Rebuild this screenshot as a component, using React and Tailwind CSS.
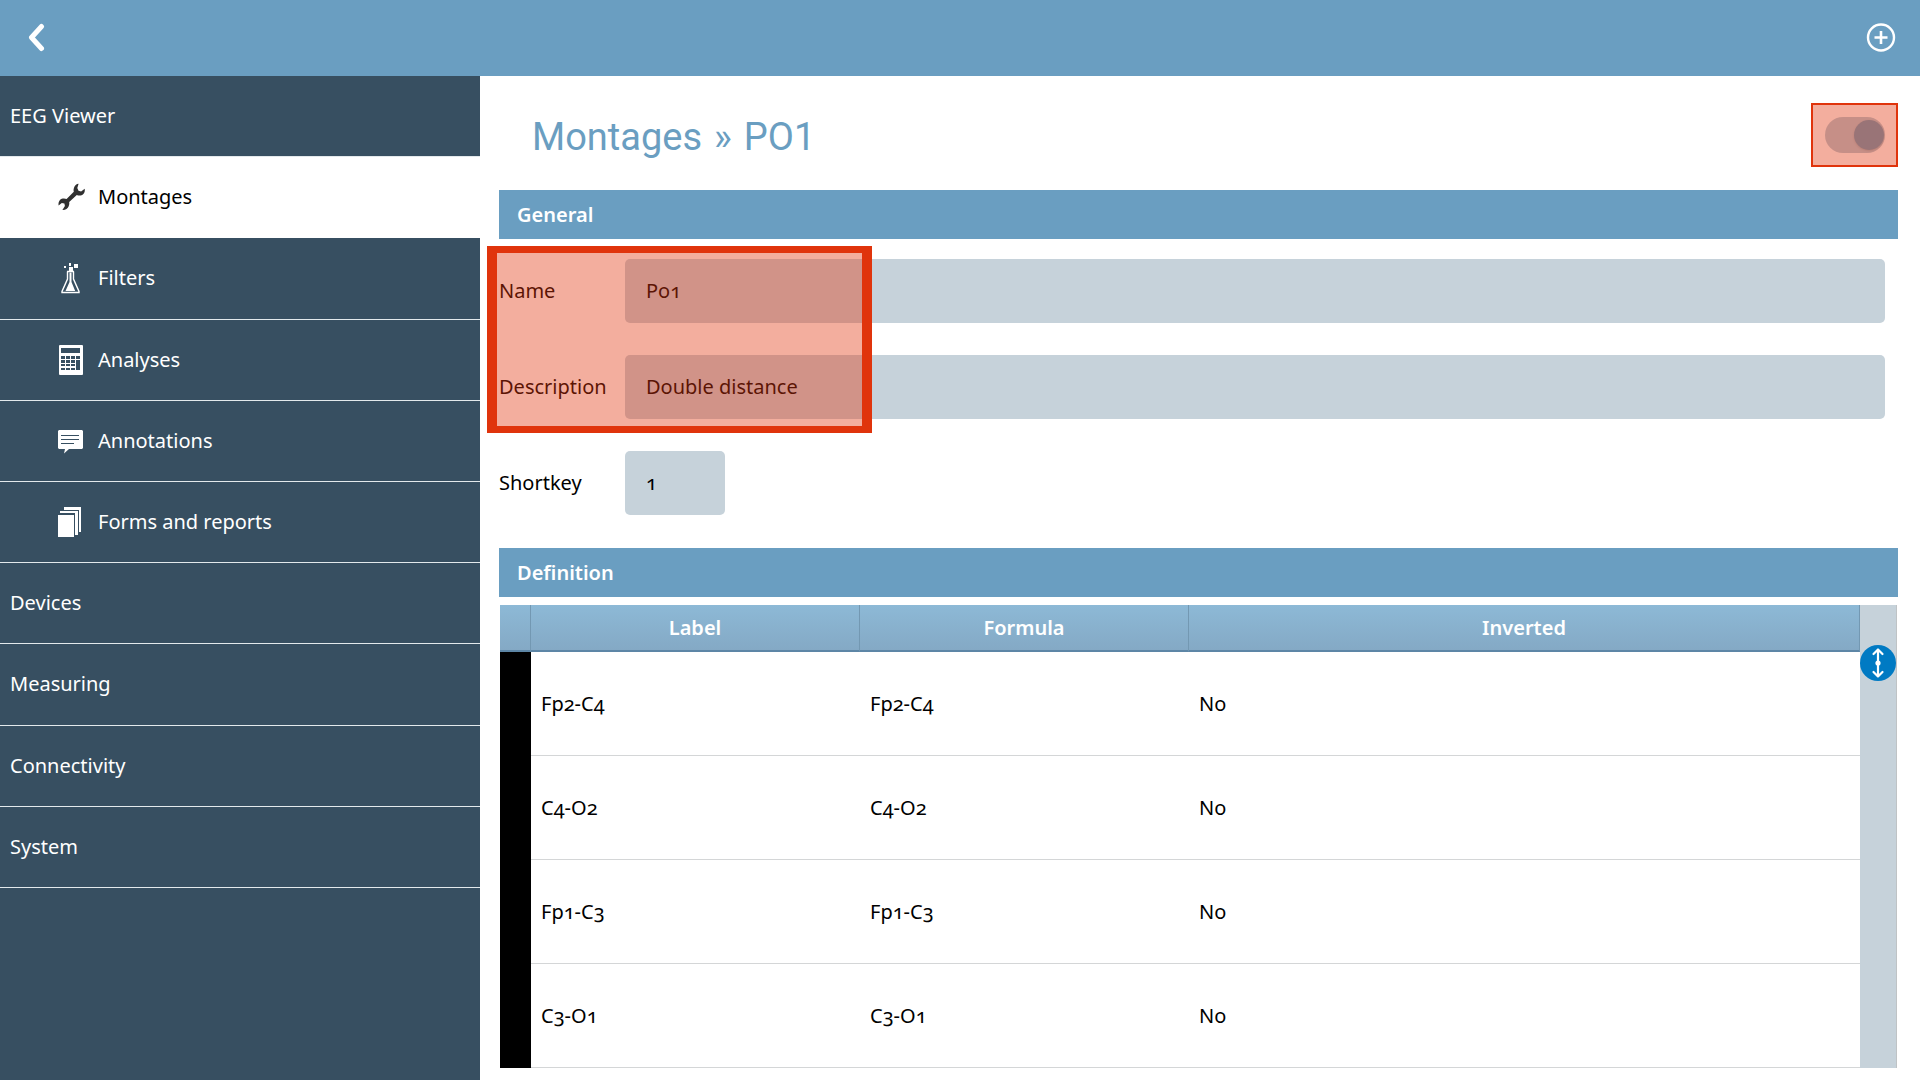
import React from "react";

const WrenchIcon = () => (
  <svg viewBox="0 0 28 28" className="size-7" fill="#303030" aria-hidden="true">
    <path d="M20.6.8 19.3 5l1.2 2.8 2.6.6 3.6-2.6c.6 3.4-1 6.2-4.200 6.700-1.400.2-2.600-.1-3.700-.5l-7.600 7.100c.3 1.400.1 2.700-.5 4.100-1 2.600-3.300 3.900-6.300 3.700l2.500-3.800-.5-2.600-2.600-.6-3.200 2.600c-.5-3.300 1-6.300 4.300-6.900 1.400-.2 2.600 0 3.700.5l7.200-7.300c-.4-1.200-.4-2.500.1-3.900.8-2.500 2.500-4 4.700-4.100z" />
  </svg>
);

const FlaskIcon = () => (
  <svg viewBox="0 0 28 32" className="w-7 h-8" fill="#fff" aria-hidden="true">
    <path d="M6 4h2v2H6zM11 1h2v3h-2zM16 2h4v4h-4zM11 5h4v4h-4z" />
    <path d="M9 9.500h7M9.500 9.500V17L4 29.500v1h17v-1L15.500 17V9.500" fill="none" stroke="#fff" strokeWidth="1.400" />
    <path d="M11.500 10.500h2V20l3.700 9H7.500l4-9z" />
  </svg>
);

const CalculatorIcon = () => (
  <svg viewBox="0 0 28 32" className="w-7 h-8" aria-hidden="true">
    <rect x="1" y="1" width="24" height="30" rx="1" fill="#fff" />
    <g fill="#374f61">
      <path d="M3 4h19v5H3z" />
      <path d="M3 12h4v3H3zM8 12h4v3H8zM13 12h4v3h-4zM18 12h4v3h-4z" />
      <path d="M3 16h4v3H3zM8 16h4v3H8zM13 16h4v3h-4zM18 16h4v10h-4z" />
      <path d="M3 20h4v2H3zM8 20h4v2H8zM13 20h4v2h-4zM3 24h4v2H3zM8 24h4v2H8zM13 24h4v2h-4z" />
    </g>
  </svg>
);

const NoteIcon = () => (
  <svg viewBox="0 0 28 32" className="w-7 h-8" aria-hidden="true">
    <path d="M1 5h23l1 1v17l-1 1H11l-5 4.500L7 24H1l-1-1V6z" fill="#fff" />
    <path d="M3 10.500h18M3 14.500h18M3 18.500h13" stroke="#374f61" strokeWidth="1" />
  </svg>
);

const FormsIcon = () => (
  <svg viewBox="0 0 28 32" className="w-7 h-8" fill="#fff" aria-hidden="true">
    <path d="M0 9h16v22H0z" />
    <path d="M2 5h18v24h-3V7H2z" />
    <path d="M6 1h17v25h-2V4H6z" />
  </svg>
);

const menu = [
  { label: "EEG Viewer" },
  { label: "Montages", Icon: WrenchIcon, active: true },
  { label: "Filters", Icon: FlaskIcon },
  { label: "Analyses", Icon: CalculatorIcon },
  { label: "Annotations", Icon: NoteIcon },
  { label: "Forms and reports", Icon: FormsIcon },
  { label: "Devices" },
  { label: "Measuring" },
  { label: "Connectivity" },
  { label: "System" },
];

const channels = ["Fp2-C4", "C4-O2", "Fp1-C3", "C3-O1"];

function MenuItem({ label, Icon, active }) {
  const tone = active ? "bg-white text-black border-white" : "text-white border-[#e3e9ec]";
  return (
    <a href="#" className={`flex items-center border-b ${Icon ? "pl-[58px] gap-3" : "pl-[10px]"} ${tone}`}>
      {Icon && <Icon />}
      <span>{label}</span>
    </a>
  );
}

function SectionBar({ children }) {
  return <h2 className="flex h-[49px] items-center bg-[#6a9ec1] pl-[18px] font-semibold text-white">{children}</h2>;
}

function Field({ id, label, value, size }) {
  return (
    <div className="flex items-center">
      <label htmlFor={id} className="w-[126px] shrink-0">{label}</label>
      <input id={id} type="text" defaultValue={value} className={`h-16 rounded-[5px] bg-[#c6d2da] px-[21px] pb-0.5 outline-none ${size}`} />
    </div>
  );
}

const headCell =
  "h-[47px] border-r border-b-2 border-r-[#7398b2] border-b-[#5d86a6] bg-linear-to-b from-[#8db9d6] to-[#84a9c5] font-semibold text-white";
const bodyCell = "border-b border-[#d4d6d7] pl-[10px]";

export default function App() {
  return (
    <div className="flex min-h-screen flex-col bg-white font-['Noto_Sans',sans-serif] text-[20px] leading-7 text-black [font-feature-settings:'onum']">
      <header className="flex h-[76px] items-center justify-between bg-[#6a9ec1] pr-6 pl-[26px]">
        <button type="button" aria-label="Back">
          <svg viewBox="0 0 20 30" className="h-[30px] w-5" fill="none" stroke="#fff" strokeWidth="5" strokeLinecap="round" strokeLinejoin="round">
            <path d="M15.500 3.500 5.500 14.500l10 11" />
          </svg>
        </button>
        <button type="button" aria-label="Add">
          <svg viewBox="0 0 30 30" className="size-[30px]" fill="none" stroke="#fff">
            <circle cx="15" cy="14.500" r="13" strokeWidth="2.400" />
            <path d="M15 8v13M8.500 14.500h13" strokeWidth="2.600" />
          </svg>
        </button>
      </header>

      <div className="flex flex-1">
        <aside className="w-1/4 shrink-0 bg-[#374f61]">
          <nav className="grid h-[812px] grid-rows-10">
            {menu.map((item) => (
              <MenuItem key={item.label} {...item} />
            ))}
          </nav>
        </aside>

        <main className="min-w-0 flex-1 pr-[22px] pl-[19px]">
          <div className="flex h-[114px] items-center justify-between pt-1 pl-[33px]">
            <h1 className="flex gap-3 pt-1 font-['Roboto',sans-serif] text-[38px] leading-[48px] text-[#6a9ec1] [font-feature-settings:normal]">
              <span>Montages</span> <span>»</span> <span>PO1</span>
            </h1>
            <label className="relative flex h-16 w-[87px] items-center justify-center">
              <input type="checkbox" role="switch" defaultChecked aria-label="Montage enabled" className="absolute inset-0 opacity-0" />
              <span className="flex h-9 w-[60px] items-center justify-end rounded-full bg-[#b5ccd9] p-[1px]">
                <span className="size-[30px] rounded-full bg-[#6a9fbe] shadow" />
              </span>
              <span className="absolute inset-0 border-2 border-[#e0340c] bg-[#e0340c]/40" />
            </label>
          </div>

          <SectionBar>General</SectionBar>
          <form className="relative flex flex-col gap-8 pt-5 pr-[13px] pb-[33px]">
            <Field id="name" label="Name" value="Po1" size="min-w-0 flex-1" />
            <Field id="description" label="Description" value="Double distance" size="min-w-0 flex-1" />
            <Field id="shortkey" label="Shortkey" value="1" size="w-[100px]" />
            <div className="pointer-events-none absolute top-[7px] -left-3 h-[187px] w-[385px] border-x-[10px] border-y-[7px] border-[#e0340c] bg-[#e0340c]/40 bg-clip-padding" />
          </form>

          <SectionBar>Definition</SectionBar>
          <div className="mt-2 ml-px flex">
            <table className="flex-1 table-fixed border-separate border-spacing-0">
              <colgroup>
                <col className="w-[31px]" />
                <col className="w-[329px]" />
                <col className="w-[329px]" />
                <col />
              </colgroup>
              <thead>
                <tr>
                  <th className={headCell} aria-label="Colour" />
                  <th className={headCell}>Label</th>
                  <th className={headCell}>Formula</th>
                  <th className={headCell}>Inverted</th>
                </tr>
              </thead>
              <tbody>
                {channels.map((name) => (
                  <tr key={name} className="h-[104px]">
                    <td className="bg-black" />
                    <td className={bodyCell}>{name}</td>
                    <td className={bodyCell}>{name}</td>
                    <td className={bodyCell}>No</td>
                  </tr>
                ))}
              </tbody>
            </table>
            <div className="mr-px w-[37px] shrink-0 border-r border-[#bfc3c5] bg-[#c6d2da] pt-10">
              <button type="button" aria-label="Scroll" className="block size-9">
                <svg viewBox="0 0 36 36" className="size-9">
                  <circle cx="18" cy="18" r="18" fill="#007ac3" />
                  <g fill="none" stroke="#fff" strokeWidth="2.200" strokeLinecap="round" strokeLinejoin="round">
                    <path d="M18 4.500v27M13.500 9 18 4.500 22.500 9M13.500 27l4.500 4.500 4.500-4.500" />
                  </g>
                  <circle cx="18" cy="18" r="2.600" fill="#fff" />
                </svg>
              </button>
            </div>
          </div>
        </main>
      </div>
    </div>
  );
}
